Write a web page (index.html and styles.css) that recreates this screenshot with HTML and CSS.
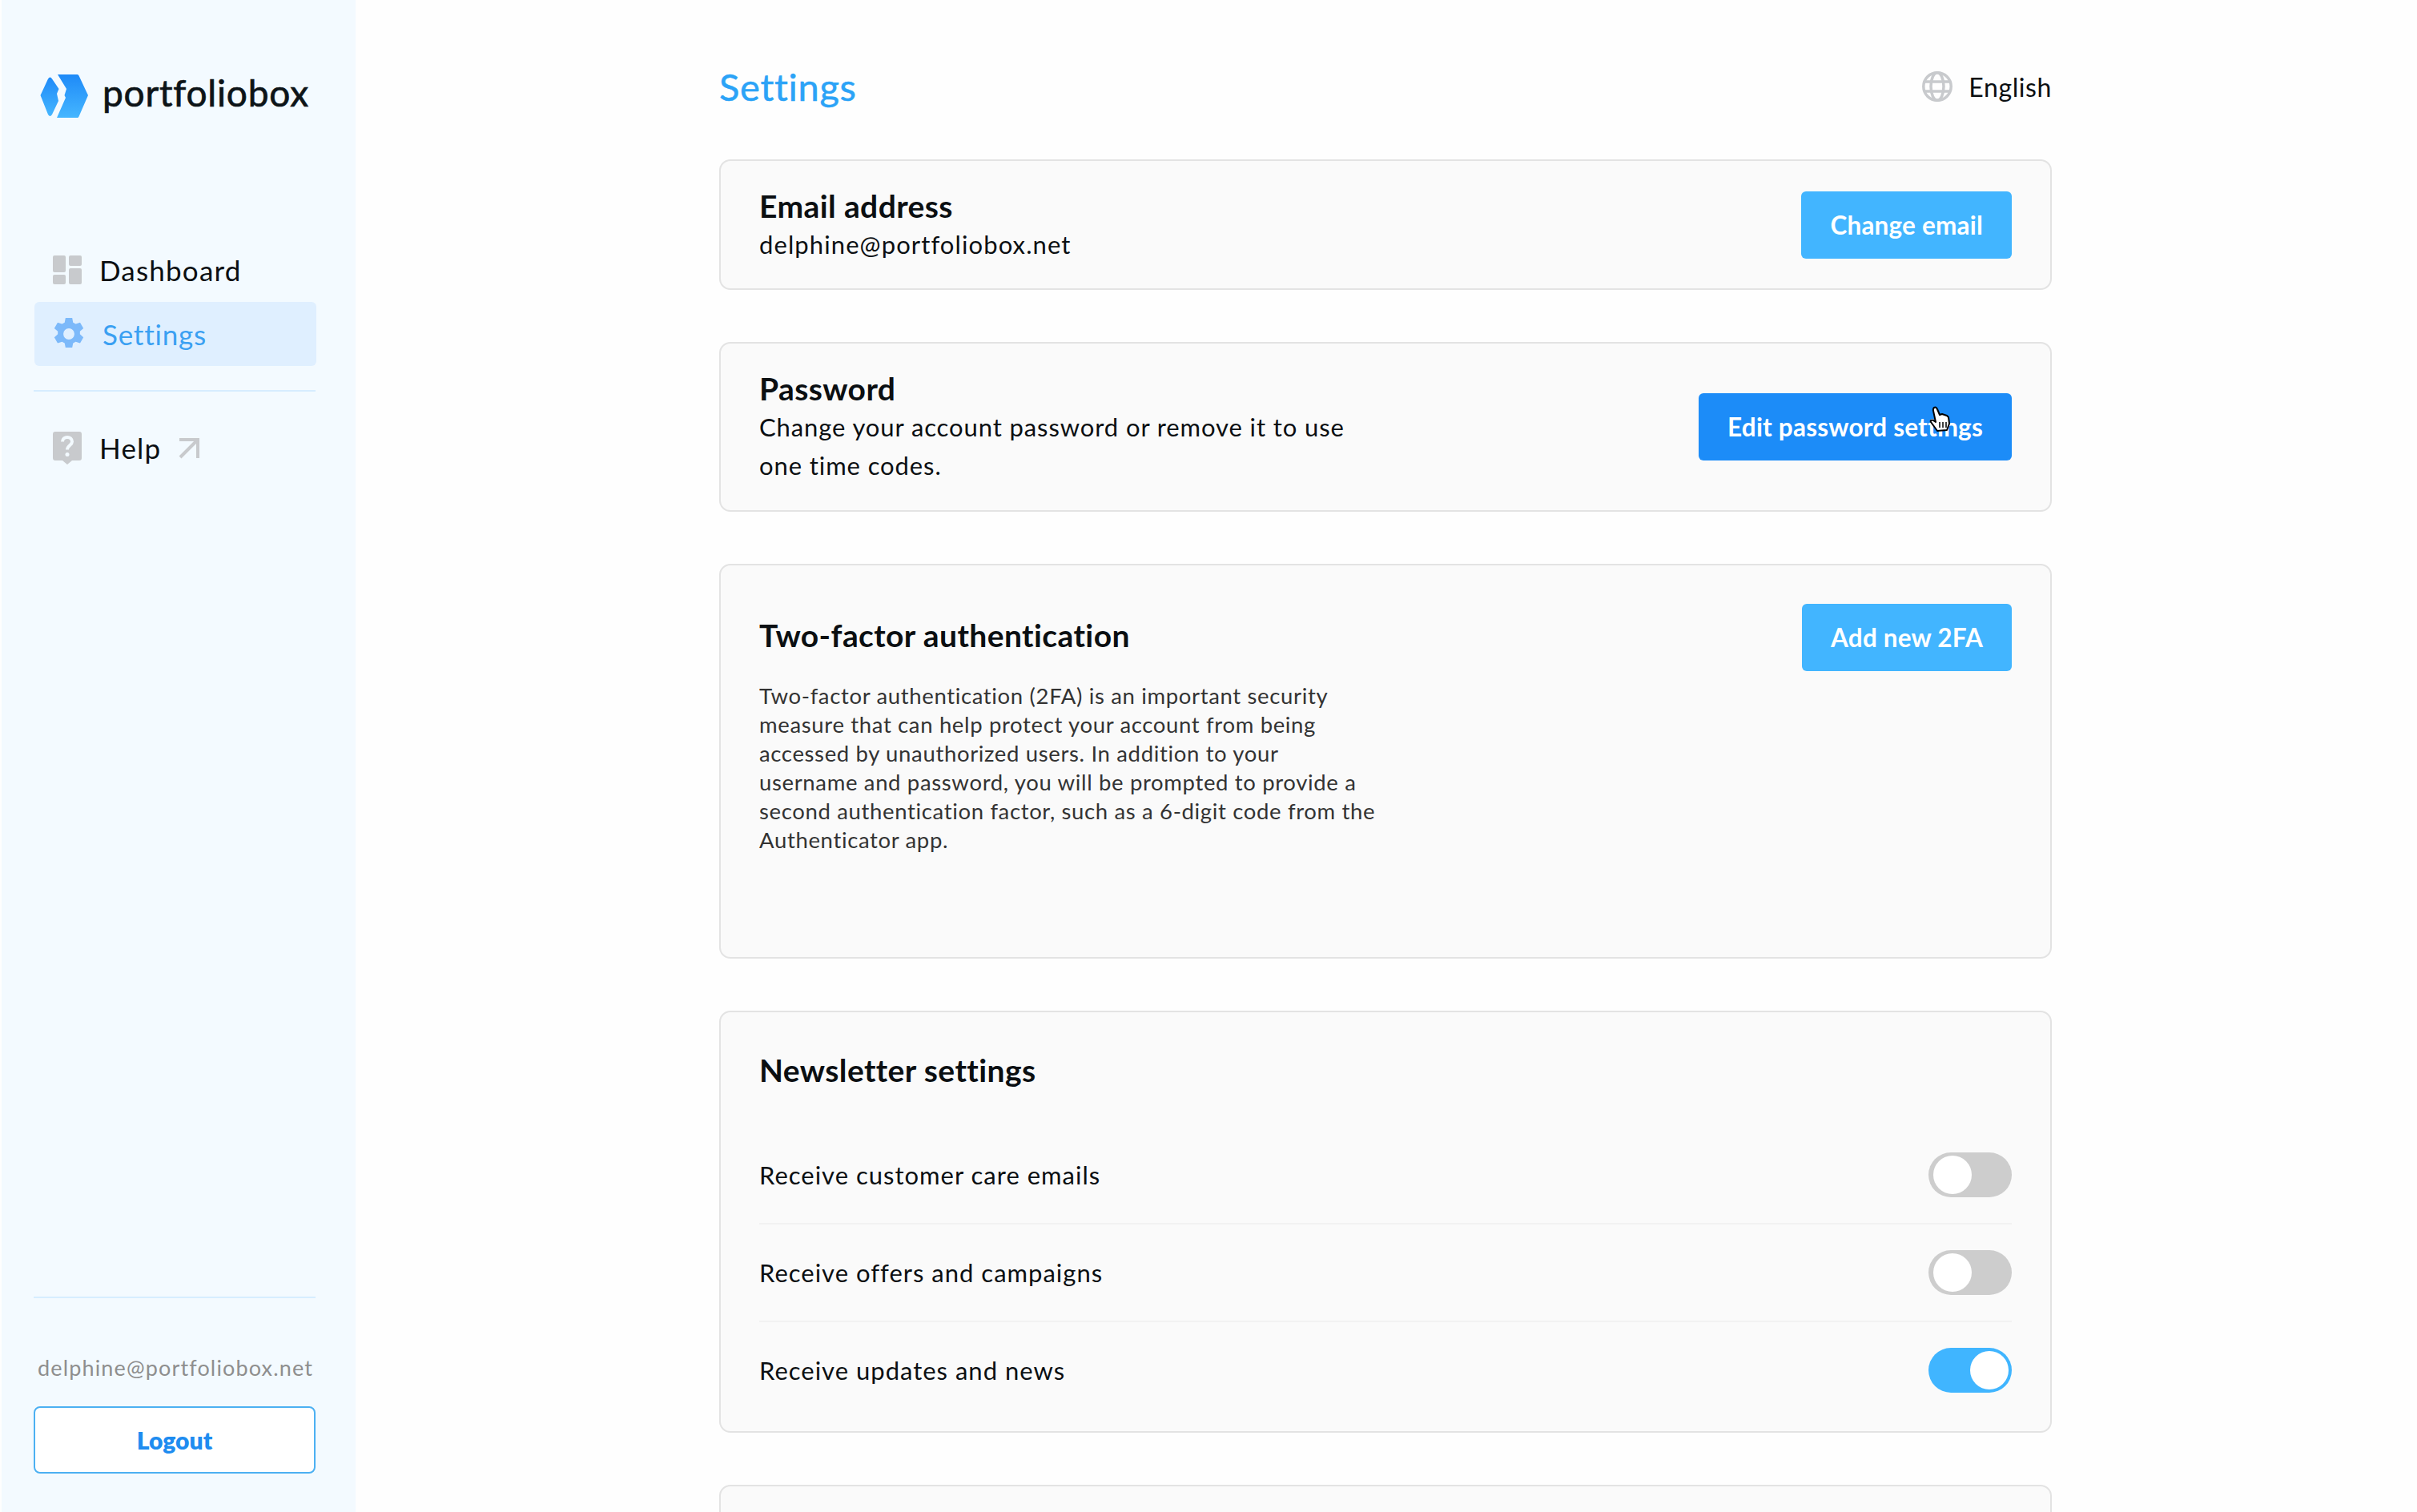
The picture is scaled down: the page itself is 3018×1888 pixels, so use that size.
FILE: index.html
```html
<!DOCTYPE html>
<html lang="en">
<head>
<meta charset="utf-8">
<title>Settings</title>
<link rel="stylesheet" href="styles.css">
</head>
<body>
<div class="app">
  <aside class="sidebar">
    <div class="logo">
      <svg class="logo-mark" viewBox="50 94 60 54" width="60" height="54">
        <defs><linearGradient id="lg" x1="0" y1="0" x2="0" y2="1"><stop offset="0" stop-color="#1e8af8"/><stop offset="1" stop-color="#45b6ff"/></linearGradient></defs>
        <path fill="url(#lg)" d="M50.500 120 60 99.500Q62.500 95.500 65 99.500L73.500 112 71 118 73 127 65 144Q62.500 148 60 144Z"/>
        <path fill="url(#lg)" d="M72 94H96.500Q98 94 98.500 95.500L110 120 98.500 146.500Q98 148 96.500 148H71L82 123 80.500 120 83 112Z"/>
      </svg>
      <span class="logo-text">portfoliobox</span>
    </div>
    <nav class="nav">
      <a class="nav-item">
        <svg class="nav-icon" viewBox="0 0 36 36" width="36" height="36" fill="#c8cacd"><rect width="16" height="21" rx="2"/><rect y="24" width="16" height="12" rx="2"/><rect x="20" width="16" height="13" rx="2"/><rect x="20" y="16" width="16" height="20" rx="2"/></svg>
        <span>Dashboard</span>
      </a>
      <a class="nav-item active">
        <svg class="nav-icon gear" viewBox="1.500 1 21 22" width="40" height="40" fill="#7cb9fa"><path fill-rule="evenodd" d="M9.700 1h4.600l.6 3.100 1.800 1 3-1 2.300 4-2.400 2.100v2l2.400 2.100-2.300 4-3-1-1.800 1-.6 3.100H9.700l-.6-3.100-1.800-1-3 1-2.300-4 2.400-2.100v-2L2 8.100l2.300-4 3 1 1.800-1zM12 8.200a3.800 3.800 0 1 0 0 7.600 3.800 3.800 0 0 0 0-7.600z"/></svg>
        <span>Settings</span>
      </a>
      <div class="rule"></div>
      <a class="nav-item help">
        <svg class="nav-icon" viewBox="0 0 36 41" width="36" height="41"><path fill="#c8cacd" d="M3 0H33Q36 0 36 3V33Q36 36 33 36H24L18 41 12 36H3Q0 36 0 33V3Q0 0 3 0Z"/><path fill="none" stroke="#f3faff" stroke-width="4" d="M12 12.500C12 5 24 5 24 12.500 24 17 18 17 18 22.500"/><circle cx="18" cy="28.500" r="2.500" fill="#f3faff"/></svg>
        <span>Help</span>
        <svg class="help-arrow" viewBox="0 0 26 26" width="26" height="26" fill="none" stroke="#c8cacd" stroke-width="4"><path d="M1 2H24V25M24 2 2 24"/></svg>
      </a>
    </nav>
    <div class="account">
      <div class="rule"></div>
      <div class="account-email">delphine@portfoliobox.net</div>
      <button class="logout">Logout</button>
    </div>
  </aside>
  <main class="main">
    <header class="head">
      <h1>Settings</h1>
      <div class="lang">
        <svg viewBox="0 0 38 38" width="38" height="38" fill="none" stroke="#c8cacd" stroke-width="3.500"><circle cx="19" cy="19" r="17.200"/><ellipse cx="19" cy="19" rx="8" ry="17.200"/><path d="M3 13H35M3 25H35"/></svg>
        <span>English</span>
      </div>
    </header>
    <section class="card card-email">
      <div>
        <h2>Email address</h2>
        <p class="body">delphine@portfoliobox.net</p>
      </div>
      <button class="btn">Change email</button>
    </section>
    <section class="card card-pass">
      <div>
        <h2>Password</h2>
        <p class="body narrow">Change your account password or remove it to use one time codes.</p>
      </div>
      <button class="btn dark">Edit password settings</button>
      <svg class="cursor" viewBox="0 0 28 34" width="28" height="34"><path fill="#fff" stroke="#000" stroke-width="2" stroke-linejoin="round" d="M7 2C9 1 10 2 11 4L14 11 17 10 20 11 23 12 25 14 26 22 23 30 11 31 3 20C2 18 4 17 6 18L9 20 6 6C5.500 4 6 3 7 2Z"/><path stroke="#000" stroke-width="1.500" d="M14 20V27M18 20V27M22 20V27"/></svg>
    </section>
    <section class="card card-2fa">
      <div class="intro-2fa">
        <h2 class="title-2fa">Two-factor authentication</h2>
        <p class="small">Two-factor authentication (2FA) is an important security measure that can help protect your account from being accessed by unauthorized users. In addition to your username and password, you will be prompted to provide a second authentication factor, such as a 6-digit code from the Authenticator app.</p>
      </div>
      <button class="btn">Add new 2FA</button>
    </section>
    <section class="card card-news">
      <h2>Newsletter settings</h2>
      <div class="rows">
        <div class="row"><span>Receive customer care emails</span><span class="toggle"></span></div>
        <div class="row"><span>Receive offers and campaigns</span><span class="toggle"></span></div>
        <div class="row"><span>Receive updates and news</span><span class="toggle on"></span></div>
      </div>
    </section>
    <section class="card card-last"></section>
  </main>
</div>
</body>
</html>
```
FILE: styles.css
```css
* { box-sizing: border-box; }
html, body { margin: 0; height: 100%; overflow: hidden; background: #fefefe; }
body { font-family: "Lato", "Liberation Sans", sans-serif; color: #0b0f12; }
h1, h2, p { margin: 0; }
.app { display: flex; height: 1888px; overflow: hidden; padding-left: 2px; }
.sidebar { width: 442px; flex: none; background: #f3faff; padding: 93px 50px 48px 40px; display: flex; flex-direction: column; }
.logo { display: flex; align-items: center; gap: 18px; padding-left: 8px; height: 54px; }
.logo-mark { flex: none; }
.logo-text { font-size: 46px; font-weight: 400; letter-spacing: .8px; line-height: 54px; color: #0d1418; padding-bottom: 9px; -webkit-text-stroke: .7px #0d1418; }
.nav { margin-top: 150px; display: flex; flex-direction: column; }
.nav-item { display: flex; align-items: center; height: 80px; padding-left: 24px; gap: 22px; font-size: 35px; color: #0b0f12; letter-spacing: 1.2px; }
.nav-item.active { background: #dfefff; border-radius: 6px; color: #3aa0f2; gap: 22px; letter-spacing: .8px; margin-left: 1px; margin-right: -1px; padding-left: 23px; }
.nav-icon { flex: none; }
.rule { height: 2px; background: #d6edff; }
.nav .rule { margin-top: 30px; }
.help { margin-top: 30px; }
.help-arrow { margin-top: 2px; }
.account { margin-top: auto; }
.account-email { font-size: 27px; color: #8e8e8e; letter-spacing: 1.15px; margin-top: 69px; line-height: 36px; padding-left: 5px; white-space: nowrap; }
.logout { display: block; margin-top: 30px; width: 100%; height: 84px; background: #fff; border: 2px solid #4cb0f2; border-radius: 8px; font: 800 30px "Lato", sans-serif; color: #1e8cf0; }
.main { margin-left: 454px; width: 1664px; flex: none; padding-top: 79px; }
.head { display: flex; justify-content: space-between; align-items: center; height: 58px; margin-bottom: 62px; }
h1 { font-size: 47px; font-weight: 400; letter-spacing: .7px; color: #2ba3f7; line-height: 58px; -webkit-text-stroke: .5px #2ba3f7; }
.lang { display: flex; align-items: center; gap: 20px; font-size: 32px; letter-spacing: .6px; }
.card { position: relative; background: #fafafa; border: 2px solid #e3e3e3; border-radius: 14px; padding: 0 48px; margin-bottom: 65px; display: flex; justify-content: space-between; align-items: center; }
.card-email { height: 163px; }
.card-pass { height: 212px; }
.card-2fa { height: 493px; align-items: flex-start; padding-top: 48px; }
.card-news { height: 527px; display: block; padding-top: 48px; }
.card-last { height: 200px; }
h2 { font-size: 39px; font-weight: 700; line-height: 48px; letter-spacing: .4px; color: #0b0f12; }
.body { font-size: 31px; line-height: 48px; letter-spacing: 1.1px; }
.narrow { width: 770px; letter-spacing: .9px; }
.intro-2fa { margin-top: 17px; }
.title-2fa { line-height: 44px; }
.small { font-size: 27.500px; line-height: 36px; letter-spacing: .65px; color: #333; width: 774px; margin-top: 36px; }
.btn { flex: none; height: 84px; padding: 0 36px; background: #42b5ff; color: #fff; border: 0; border-radius: 6px; font: 700 31.500px "Lato", sans-serif; letter-spacing: .2px; }
.btn.dark { background: #1c8cf8; }
.cursor { position: absolute; left: 1508px; top: 78px; }
.rows { margin-top: 47px; }
.row { display: flex; justify-content: space-between; align-items: center; height: 122px; font-size: 31px; letter-spacing: 1px; border-bottom: 2px solid #f2f2f2; }
.row:last-child { border-bottom-color: transparent; }
.toggle { display: block; position: relative; width: 104px; height: 56px; border-radius: 28px; background: #cdcdcd; }
.toggle::after { content: ""; position: absolute; left: 6px; top: 4px; width: 48px; height: 48px; border-radius: 50%; background: #fff; }
.toggle.on { background: #40b5ff; }
.toggle.on::after { left: 52px; }
```
